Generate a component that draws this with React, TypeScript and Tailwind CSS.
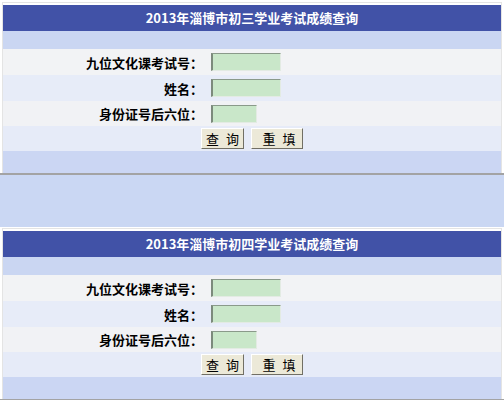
import React from "react";

const FIELDS = [
  { label: "九位文化课考试号：", width: "w-[70px]", bg: "bg-[#f2f3f5]", h: "h-[26px]" },
  { label: "姓名：", width: "w-[70px]", bg: "bg-[#e7ecf8]", h: "h-[26px]" },
  { label: "身份证号后六位：", width: "w-[46px]", bg: "bg-[#f1f2f5]", h: "h-[25px]" },
];

function Panel({ title, top }: { title: string; top: string }) {
  return (
    <div className={`bg-white ${top}`}>
      <div className="mx-[2px] border-t border-l border-r border-[#e4e4e4] pt-[2px]">
        <div className="h-[26px] bg-[#4152a7] flex items-center justify-center text-[13px] font-bold text-white">
          {title}
        </div>
        <div className="h-[18px] bg-[#cad6f2]" />

        {FIELDS.map((f) => (
          <div key={f.label} className={`flex items-center ${f.h} ${f.bg}`}>
            <div className="w-[200px] text-right text-[13px] font-bold text-black leading-none">
              {f.label}
            </div>
            <div className="pl-[8px] flex items-center">
              <input
                type="text"
                className={`${f.width} h-[18px] bg-[#c9e7c9] border-t border-l-2 border-r border-b border-t-[#8a9a8a] border-l-[#7c8a7c] border-r-[#e3ebe3] border-b-[#e3ebe3] outline-none`}
              />
            </div>
          </div>
        ))}

        <div className="h-[25px] bg-[#e6ebf8] flex items-center justify-center gap-[7px]">
          <button className="w-[43px] h-[21px] bg-[#ece9d8] border border-t-white border-l-white border-r-[#716f64] border-b-[#716f64] text-[13px] text-black leading-none [word-spacing:4px]">
            查 询
          </button>
          <button className="w-[52px] h-[21px] bg-[#ece9d8] border border-t-white border-l-white border-r-[#716f64] border-b-[#716f64] text-[13px] text-black leading-none pl-[4px] [word-spacing:4px]">
            重 填
          </button>
        </div>

        <div className="h-[22px] bg-[#cbd6f3]" />
      </div>
      <div className="h-[2px] bg-[#a3a3a3]" />
    </div>
  );
}

export default function App() {
  return (
    <div className="w-[504px] h-[400px] overflow-hidden bg-white font-['Noto_Sans_CJK_SC',sans-serif]">
      <Panel title="2013年淄博市初三学业考试成绩查询" top="pt-[2px]" />
      <div className="h-[52px] bg-[#cad7f3]" />
      <Panel title="2013年淄博市初四学业考试成绩查询" top="pt-[1px]" />
    </div>
  );
}
